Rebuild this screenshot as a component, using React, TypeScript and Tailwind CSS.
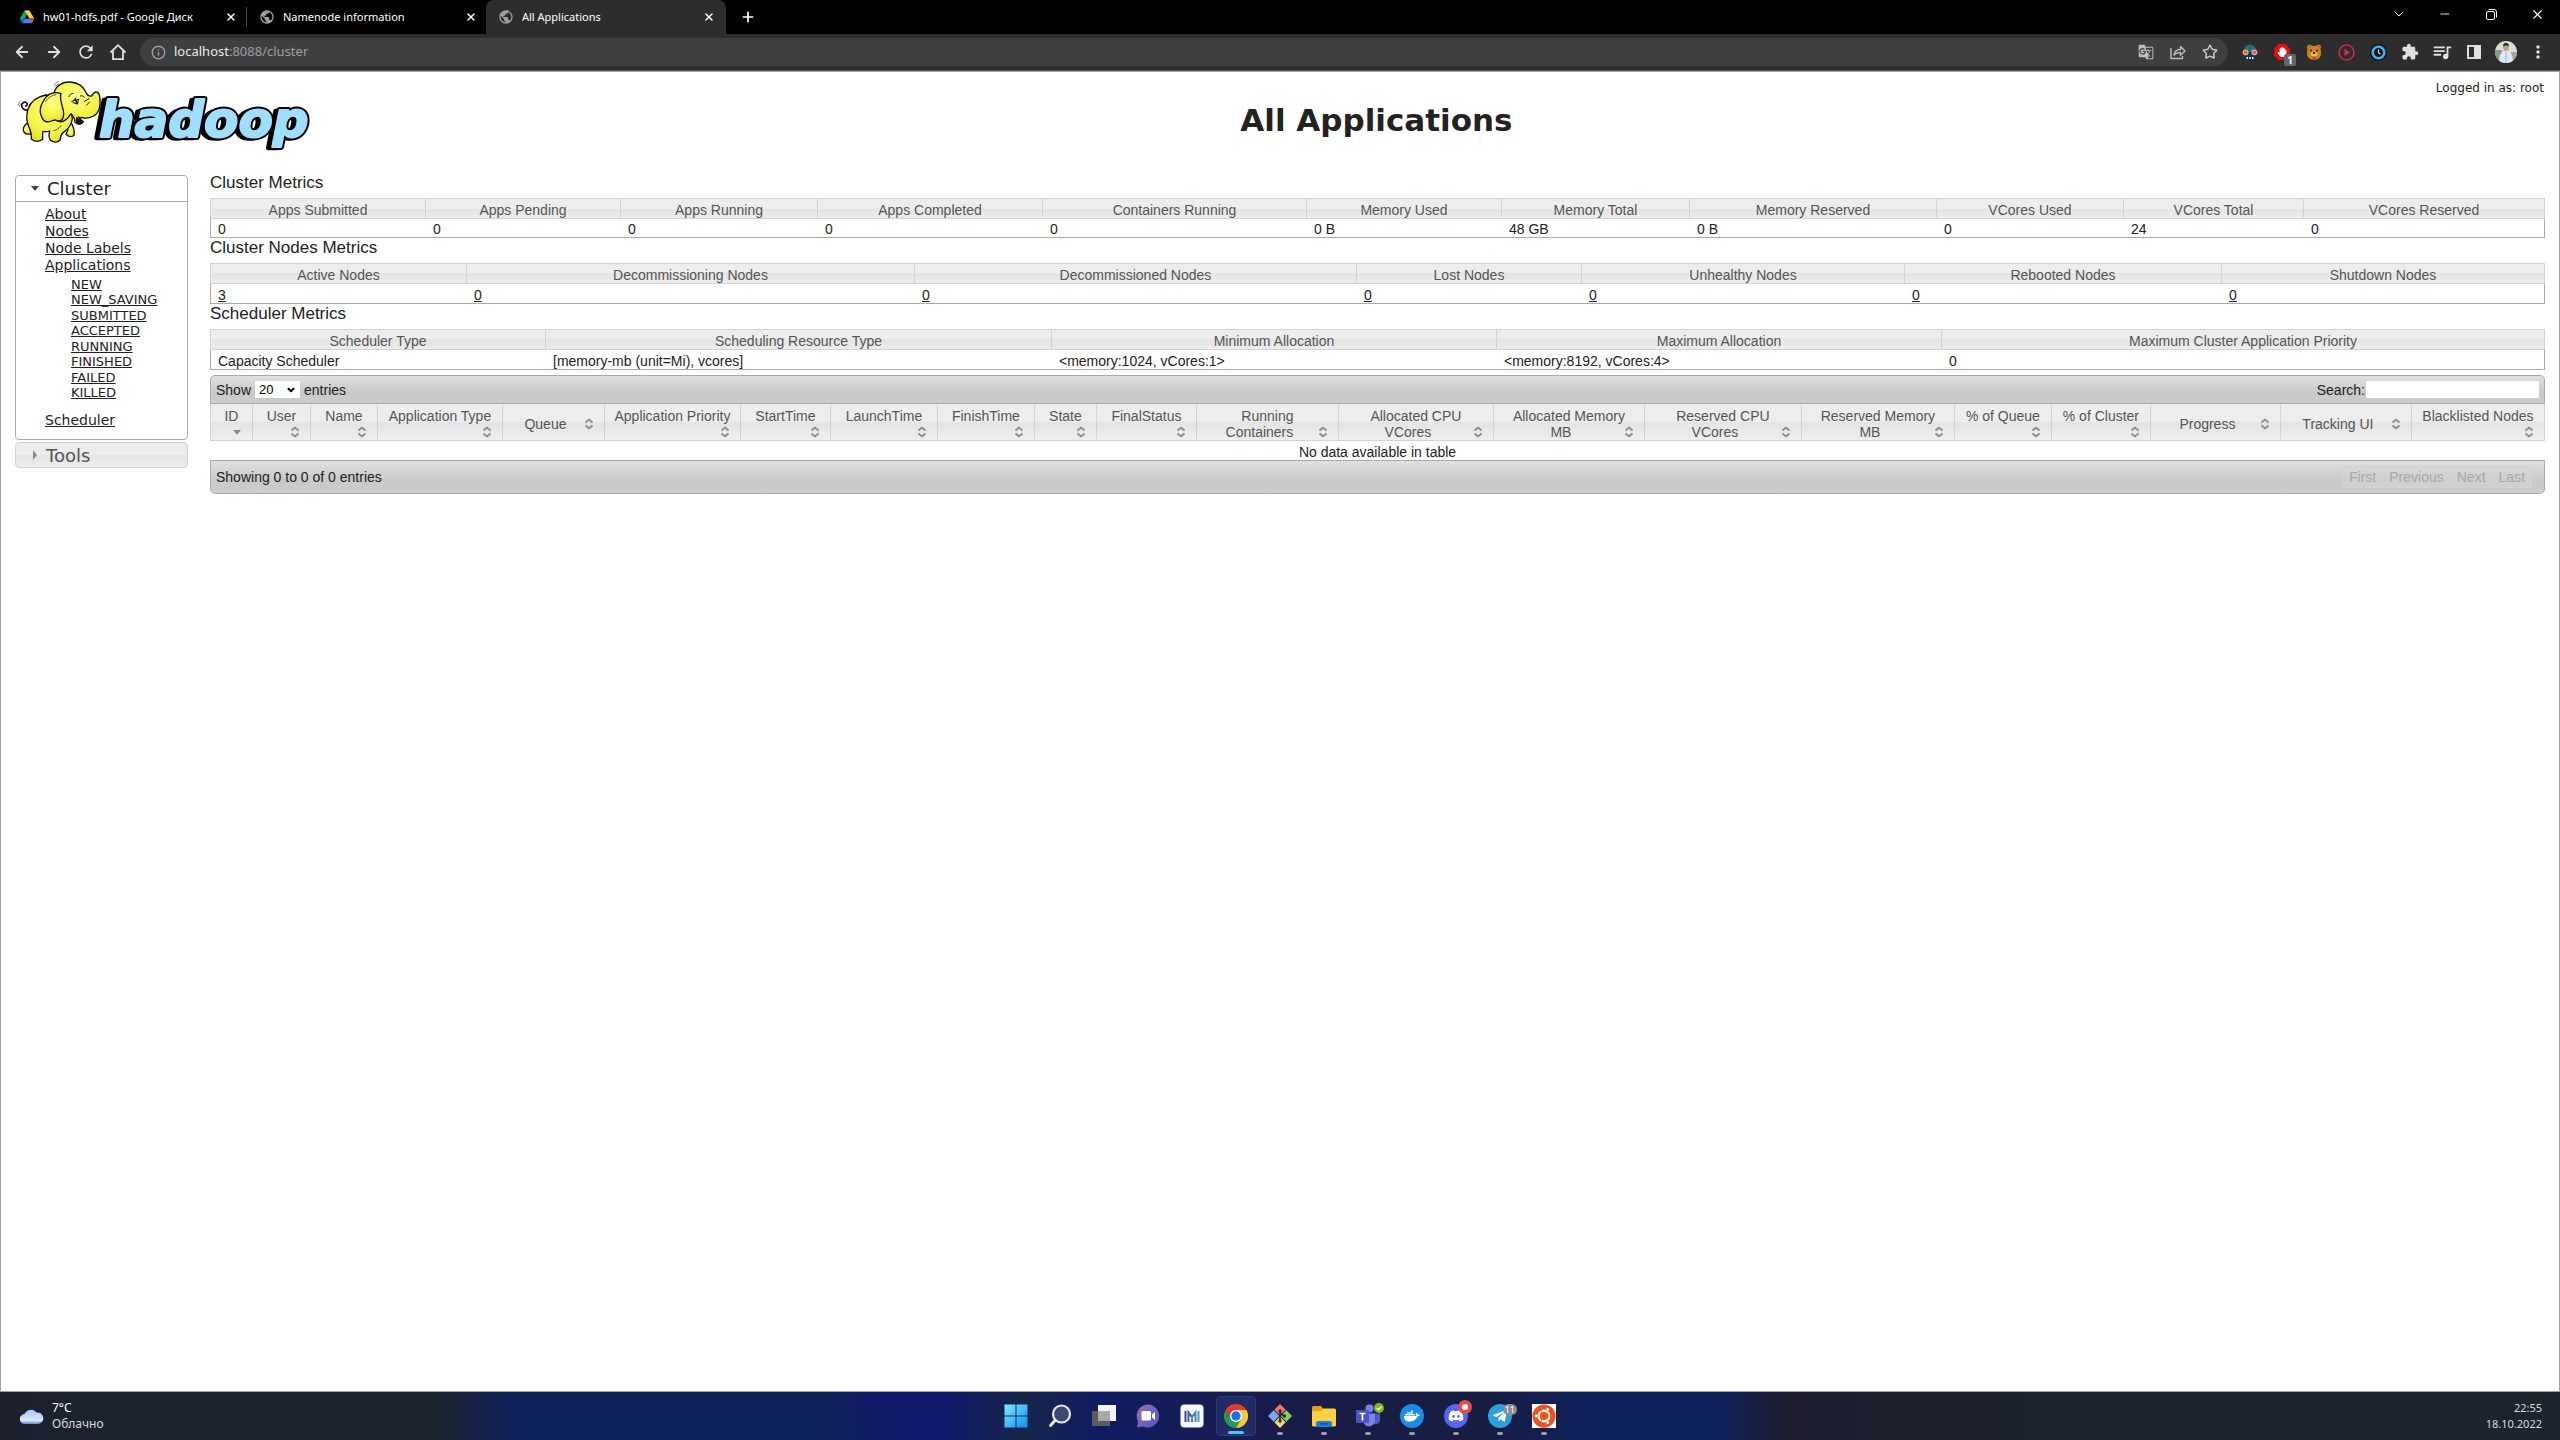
import type { ReactNode } from 'react';
import { ArrowLeft, ArrowRight, ChevronDown, Info, Minus, Plus, Star, X } from 'lucide-react';
import { FaDocker, FaDiscord, FaUbuntu, FaTelegramPlane, FaHandPaper } from 'react-icons/fa';
import { MdExtension, MdGTranslate, MdRefresh, MdQueueMusic, MdPublic } from 'react-icons/md';

/* ---------- Browser chrome ---------- */

function DriveIcon() {
  return (
    <svg className="size-4" viewBox="0 0 16 16" aria-hidden="true">
      <path d="M5.6 1.5h4.8L8 5.6 3.3 13.8 .8 9.6z" fill="#11a75c" />
      <path d="M5.6 1.5h4.8l4.8 8.1h-4.8z" fill="#ffcf48" />
      <path d="M3.3 14.2 5.7 9.8h9.5l-2.5 4.4z" fill="#3e82f1" />
      <path d="M.8 9.8h4.9l-2.4 4.4z" fill="#1f5fd0" />
      <path d="M10.3 9.8h4.9l-2.5 4.4z" fill="#e94335" />
    </svg>
  );
}

function Tab({ icon, title, active }: { icon: ReactNode; title: string; active?: boolean }) {
  return (
    <div
      className={
        active
          ? 'flex h-full w-[240px] items-center rounded-t-lg bg-[#2d2d2d] pr-[9px] pl-3 text-white'
          : 'flex h-full w-[239px] items-center pr-[7px] pl-3 text-white'
      }
    >
      <span className="flex size-4 shrink-0 items-center justify-center text-[#9aa0a6]">{icon}</span>
      <span className="ml-2 flex-1 truncate">{title}</span>
      <button type="button" aria-label={'Close ' + title} className="flex size-4 items-center justify-center">
        <X className="size-3" strokeWidth={3} />
      </button>
    </div>
  );
}

function BarButton({ label, children }: { label: string; children: ReactNode }) {
  return (
    <button type="button" aria-label={label} className="relative flex h-8 w-8 items-center justify-center text-[#e0e0e0]">
      {children}
    </button>
  );
}

function WindowButton({ label, children }: { label: string; children: ReactNode }) {
  return (
    <button type="button" aria-label={label} className="flex h-7 w-[46px] items-center justify-center text-white">
      {children}
    </button>
  );
}

function MaskIcon() {
  return (
    <svg className="size-4" viewBox="0 0 16 16" aria-hidden="true">
      <path d="M2 6.500a6 6 0 0 1 12 0V8H2z" fill="#2a6a7c" />
      <path d="M2.500 9h11v6h-11z" fill="#123a4a" />
      <circle cx="3.600" cy="8.300" r="2.900" fill="#e9c4b4" />
      <circle cx="12.400" cy="8.300" r="2.900" fill="#e9c4b4" />
      <circle cx="3.600" cy="8.300" r="2" fill="#f0603a" />
      <circle cx="12.400" cy="8.300" r="2" fill="#f0603a" />
      <path d="M4.500 13h1.500v2H4.500zM7.300 13h1.500v2H7.300zM10 13h1.500v2H10z" fill="#e8eef0" />
    </svg>
  );
}

function BlockerIcon() {
  return (
    <>
      <svg className="size-4" viewBox="0 0 16 16" aria-hidden="true">
        <path d="M4.700 0h6.600L16 4.700v6.600L11.300 16H4.700L0 11.300V4.700z" fill="#e01010" />
      </svg>
      <FaHandPaper className="absolute size-[10px] text-white" />
      <span className="absolute top-[18px] left-[18px] flex h-3 w-3 items-center justify-center rounded-xs bg-[#62666a] text-[10px] font-bold text-white">
        1
      </span>
    </>
  );
}

function BearIcon() {
  return (
    <svg className="size-4" viewBox="0 0 16 16" aria-hidden="true">
      <circle cx="3.500" cy="3" r="2.600" fill="#b8741e" />
      <circle cx="12.500" cy="3" r="2.600" fill="#b8741e" />
      <rect x="1" y="1.800" width="14" height="14" rx="6" fill="#c98327" />
      <circle cx="5" cy="6.500" r="1" fill="#2c1a08" />
      <circle cx="11" cy="6.500" r="1" fill="#2c1a08" />
      <ellipse cx="8" cy="10" rx="3.200" ry="2.600" fill="#f2c230" />
      <ellipse cx="8" cy="9" rx="1.500" ry="1" fill="#2c1a08" />
      <path d="M6.500 12.500h3V15h-3z" fill="#e2352c" />
    </svg>
  );
}

function PlayIcon() {
  return (
    <svg className="size-[17px]" viewBox="0 0 17 17" aria-hidden="true">
      <circle cx="8.500" cy="8.500" r="7.500" fill="none" stroke="#cf2650" strokeWidth="1.600" />
      <path d="M6.500 5l5.500 3.500L6.500 12z" fill="#e22858" />
    </svg>
  );
}

function ClockIcon() {
  return (
    <svg className="size-[17px]" viewBox="0 0 17 17" aria-hidden="true">
      <circle cx="8.500" cy="8.500" r="8.500" fill="#10141a" />
      <circle cx="8.500" cy="8.500" r="5.800" fill="none" stroke="#3fb3f0" strokeWidth="2.600" />
      <path d="M8.500 5.500v3.300l2 1.500" fill="none" stroke="#ddd" strokeWidth="1.200" />
    </svg>
  );
}

function Avatar() {
  return (
    <svg className="size-[22px]" viewBox="0 0 22 22" aria-hidden="true">
      <clipPath id="avatar-clip">
        <circle cx="11" cy="11" r="11" />
      </clipPath>
      <g clipPath="url(#avatar-clip)">
        <rect width="22" height="22" fill="#d9dedb" />
        <rect y="9" width="7" height="13" fill="#8c9a86" />
        <rect x="16" y="11" width="6" height="11" fill="#a8a698" />
        <path d="M4 22c0-8 2-12 7-12s7 4 7 12z" fill="#dfe6f5" />
        <path d="M11 11v11" stroke="#a9b6d6" strokeWidth="1" />
        <ellipse cx="11" cy="6.500" rx="2.800" ry="3.500" fill="#c79a84" />
        <path d="M8 5.500c0-5 6-5 6 0-1.500-1.500-4.500-1.500-6 0z" fill="#2f2622" />
      </g>
    </svg>
  );
}

function BrowserChrome() {
  return (
    <div className="font-['Noto_Sans','Open_Sans',sans-serif]">
      <div className="flex h-[34px] items-center justify-between bg-black text-[11px]">
        <div className="flex h-full items-center pl-[7px]">
          <Tab icon={<DriveIcon />} title="hw01-hdfs.pdf - Google Диск" />
          <span className="h-5 w-px bg-[#4a4c50]" />
          <Tab icon={<MdPublic className="size-4" />} title="Namenode information" />
          <Tab icon={<MdPublic className="size-4" />} title="All Applications" active />
          <button type="button" aria-label="New tab" className="ml-[14px] flex size-4 items-center justify-center text-white">
            <Plus className="size-4" strokeWidth={2.5} />
          </button>
        </div>
        <div className="flex h-full items-start">
          <WindowButton label="Search tabs">
            <ChevronDown className="size-4" strokeWidth={1.5} />
          </WindowButton>
          <WindowButton label="Minimize">
            <Minus className="size-[14px]" strokeWidth={1.5} />
          </WindowButton>
          <WindowButton label="Restore">
            <svg className="size-[11px]" viewBox="0 0 11 11" fill="none" stroke="currentColor" aria-hidden="true">
              <rect x=".5" y="2.500" width="8" height="8" rx="1.500" />
              <path d="M2.500.5h5.500a2.500 2.500 0 0 1 2.500 2.500v5.500" />
            </svg>
          </WindowButton>
          <WindowButton label="Close">
            <X className="size-[15px]" strokeWidth={1.8} />
          </WindowButton>
        </div>
      </div>

      <div className="flex h-[37px] items-center border-b border-[#5a5a5a] bg-[#2d2d2d] pr-[6px] pl-[6px]">
        <BarButton label="Back">
          <ArrowLeft className="size-[18px]" strokeWidth={2.4} />
        </BarButton>
        <BarButton label="Forward">
          <ArrowRight className="size-[18px]" strokeWidth={2.4} />
        </BarButton>
        <BarButton label="Reload">
          <MdRefresh className="size-5" />
        </BarButton>
        <BarButton label="Home">
          <svg className="size-[18px]" viewBox="0 0 18 18" fill="none" stroke="currentColor" strokeWidth="1.800" aria-hidden="true">
            <path d="M1.500 9.500 9 2.200l7.500 7.300M4 8v8.200h10V8" />
          </svg>
        </BarButton>
        <div className="ml-[6px] flex h-7 flex-1 items-center rounded-full bg-[#3f3f3f] pr-[2px] pl-[11px]">
          <Info className="size-[15px] text-[#9aa0a6]" strokeWidth={2.2} />
          <div className="ml-2 flex-1 text-[13px] text-[#9aa0a6]">
            <span className="text-[#e8eaed]">localhost</span>:8088/cluster
          </div>
          <BarButton label="Translate this page">
            <MdGTranslate className="size-4 text-[#bdbdbd]" />
          </BarButton>
          <BarButton label="Share this page">
            <svg className="size-4" viewBox="0 0 16 16" fill="none" stroke="#bdbdbd" strokeWidth="1.400" strokeLinejoin="round" aria-hidden="true">
              <path d="M1 4v10.500h11.500V12" />
              <path d="M4 11c.5-4 3-5.500 6.500-5.500V2.500L15 7l-4.500 4.300V8.500C8 8.500 6 9 4 11z" />
            </svg>
          </BarButton>
          <BarButton label="Bookmark this tab">
            <Star className="size-4 text-[#c8c8c8]" strokeWidth={2.2} />
          </BarButton>
        </div>
        <div className="ml-[6px] flex items-center">
          <BarButton label="Incognito extension">
            <MaskIcon />
          </BarButton>
          <BarButton label="Ad blocker">
            <BlockerIcon />
          </BarButton>
          <BarButton label="Bear extension">
            <BearIcon />
          </BarButton>
          <BarButton label="Player extension">
            <PlayIcon />
          </BarButton>
          <BarButton label="Clock extension">
            <ClockIcon />
          </BarButton>
          <BarButton label="Extensions">
            <MdExtension className="size-[18px]" />
          </BarButton>
          <BarButton label="Media controls">
            <MdQueueMusic className="size-[22px]" />
          </BarButton>
          <BarButton label="Side panel">
            <svg className="size-[14px]" viewBox="0 0 14 14" aria-hidden="true">
              <path d="M0 0h14v14H0zM2 2v10h5V2z" fill="#e0e0e0" fillRule="evenodd" />
            </svg>
          </BarButton>
          <BarButton label="Profile">
            <Avatar />
          </BarButton>
          <BarButton label="Menu">
            <svg className="h-[14px] w-1" viewBox="0 0 4 14" fill="#e0e0e0" aria-hidden="true">
              <circle cx="2" cy="2" r="1.700" />
              <circle cx="2" cy="7" r="1.700" />
              <circle cx="2" cy="12" r="1.700" />
            </svg>
          </BarButton>
        </div>
      </div>
    </div>
  );
}

/* ---------- Hadoop page ---------- */

function HadoopLogo() {
  return (
    <svg className="h-[72px] w-[300px] shrink-0" viewBox="50 28 900 216" role="img" aria-label="hadoop">
      <defs>
        <radialGradient id="hide" cx=".5" cy=".35" r=".75">
          <stop offset="0" stopColor="#ffff8c" />
          <stop offset=".6" stopColor="#f5f345" />
          <stop offset="1" stopColor="#d9d62a" />
        </radialGradient>
      </defs>
      <g className="font-['DejaVu_Sans'] text-[150px] font-bold italic" strokeLinejoin="round">
        <text x="284" y="202" fill="#000" stroke="#000" strokeWidth="14">hadoop</text>
        <text x="296" y="200" fill="#000" stroke="#000" strokeWidth="18">hadoop</text>
        <text x="296" y="200" fill="#a0deff" stroke="#a0deff" strokeWidth="6">hadoop</text>
      </g>
      <g stroke="#111" strokeWidth="4" strokeLinejoin="round" strokeLinecap="round">
        <path d="M84 118c-10 2-19-4-20-12-1-9 8-14 14-10 5 4 2 9-2 10" fill="none" strokeWidth="5" />
        <path d="M80 158c-8 6-12 14-11 22 3 8 10 12 22 10l10-18z" fill="url(#hide)" />
        <path d="M200 165c4 8 2 18-3 26 8 8 18 9 24 3 2-12-3-30-11-42z" fill="url(#hide)" />
        <path d="M136 73c-28 6-46 22-53 42-6 20-5 36 2 52 6 14 9 26 8 38 8 9 25 9 34 1 0-8-1-14 1-24 6 2 12 2 20-1-3 12-3 20 2 27 9 8 24 9 30-1 0-10 3-18 12-24 14-10 22-24 24-38l-10-70z" fill="url(#hide)" />
        <path d="M162 64c6-20 26-31 48-30 22 2 38 12 45 28 5 10 12 16 19 14 4-6 8-13 13-12 7 0 10 6 11 14 4 28 0 48-18 58-12 6-26 8-36 4-2 2-6 2-10-1 4 6 12 10 14 14-4 10-16 10-24 2 0-10-4-18-12-26-10 16-22 26-34 24-26-2-36-50-16-89z" fill="url(#hide)" />
        <path d="M180 68c-22-6-40 4-50 22-10 16-14 30-8 44 4 12 12 20 20 20 8 0 16-6 24-6 6 4 14 4 20-2 6-10 4-26 0-38-4-14-8-28-4-40z" fill="url(#hide)" />
        <path d="M229 141c4 6 12 10 20 12-4 6-14 8-20 2z" fill="#111" />
        <path d="M206 78c2-6 6-10 12-10M240 76c6-2 8 0 12 4M252 92l14-8M258 104l10-10M214 92l22-6M218 96l14 4 2-14M220 88l8-8" fill="none" strokeWidth="3" />
        <path d="M226 88l4 10" strokeWidth="6" />
        <path d="M136 92c8-12 18-18 30-20M90 178l2 10M160 180c8-2 16-6 22-14" fill="none" strokeWidth="2" />
      </g>
      <g stroke="#888" strokeWidth="3" fill="none" strokeLinecap="round">
        <path d="M162 44c2-6 6-9 12-11M166 48c2-4 4-6 8-8M54 104c0-5 2-9 6-12M58 108c0-4 1-7 4-10" />
      </g>
    </svg>
  );
}

const appStates = ['NEW', 'NEW_SAVING', 'SUBMITTED', 'ACCEPTED', 'RUNNING', 'FINISHED', 'FAILED', 'KILLED'];

function Sidebar() {
  return (
    <nav className="mt-[2px] ml-[14px] w-[173px] shrink-0 font-['DejaVu_Sans',Verdana,sans-serif] text-[#222]">
      <section className="rounded-[4px] border border-[#aaa] bg-white">
        <h3>
          <button type="button" className="flex h-[25px] w-full items-center pl-[15px] text-[18px] leading-6">
            <span className="mr-2 border-x-[4px] border-t-[5px] border-x-transparent border-t-[#454545]" />
            Cluster
          </button>
        </h3>
        <div className="h-[238px] border-t border-[#aaa] pt-1 pl-[29px] text-sm leading-[17px]">
          <ul>
            {['About', 'Nodes', 'Node Labels', 'Applications'].map((t) => (
              <li key={t}>
                <a href={'#' + t} className="underline">{t}</a>
              </li>
            ))}
          </ul>
          <ul className="mt-[3px] flex h-[123px] flex-col justify-between pl-[26px] text-[13px] leading-[15px]">
            {appStates.map((t) => (
              <li key={t}>
                <a href={'#' + t} className="underline">{t}</a>
              </li>
            ))}
          </ul>
          <a href="#scheduler" className="mt-3 inline-block underline">Scheduler</a>
        </div>
      </section>
      <h3 className="mt-[2px]">
        <button
          type="button"
          className="flex h-[26px] w-full items-center rounded-[4px] border border-[#d3d3d3] bg-[linear-gradient(#ededed_50%,#e4e4e4_50%,#eeeeee)] pl-[17px] text-[18px] text-[#555]"
        >
          <span className="mr-[9px] border-y-[5px] border-l-[4px] border-y-transparent border-l-[#888]" />
          Tools
        </button>
      </h3>
    </nav>
  );
}

type Column = { label: string; width: number; value: string };

function Columns({ widths }: { widths: number[] }) {
  const total = widths.reduce((a, b) => a + b, 0);
  return (
    <colgroup>
      {widths.map((w, i) => (
        <col key={i} style={{ width: `${(w / total) * 100}%` }} />
      ))}
    </colgroup>
  );
}

function Metrics({ title, columns, links, compact }: { title: string; columns: Column[]; links?: boolean; compact?: boolean }) {
  return (
    <section>
      <h3 className="h-[25px] text-[17px] leading-5">{title}</h3>
      <table className="w-full table-fixed border-separate border-spacing-0 text-sm" aria-label={title}>
        <Columns widths={columns.map((c) => c.width)} />
        <thead>
          <tr>
            {columns.map((c) => (
              <th
                key={c.label}
                className="h-[21px] border-y border-r border-[#d3d3d3] bg-[linear-gradient(#ededed_50%,#e4e4e4_50%,#ededed)] pt-1 text-center leading-[15px] font-normal text-[#555] first:border-l"
              >
                {c.label}
              </th>
            ))}
          </tr>
        </thead>
        <tbody className={compact ? 'leading-[15px]' : 'leading-4'}>
          <tr>
            {columns.map((c) => (
              <td key={c.label} className="border-b border-[#aaa] pt-[3px] pl-[7px] first:border-l last:border-r">
                {links ? <a href="#nodes" className="underline">{c.value}</a> : c.value}
              </td>
            ))}
          </tr>
        </tbody>
      </table>
    </section>
  );
}

const clusterMetrics: Column[] = [
  { label: 'Apps Submitted', width: 216, value: '0' },
  { label: 'Apps Pending', width: 195, value: '0' },
  { label: 'Apps Running', width: 197, value: '0' },
  { label: 'Apps Completed', width: 225, value: '0' },
  { label: 'Containers Running', width: 264, value: '0' },
  { label: 'Memory Used', width: 195, value: '0 B' },
  { label: 'Memory Total', width: 188, value: '48 GB' },
  { label: 'Memory Reserved', width: 247, value: '0 B' },
  { label: 'VCores Used', width: 187, value: '0' },
  { label: 'VCores Total', width: 180, value: '24' },
  { label: 'VCores Reserved', width: 241, value: '0' },
];

const nodeMetrics: Column[] = [
  { label: 'Active Nodes', width: 257, value: '3' },
  { label: 'Decommissioning Nodes', width: 448, value: '0' },
  { label: 'Decommissioned Nodes', width: 442, value: '0' },
  { label: 'Lost Nodes', width: 225, value: '0' },
  { label: 'Unhealthy Nodes', width: 323, value: '0' },
  { label: 'Rebooted Nodes', width: 317, value: '0' },
  { label: 'Shutdown Nodes', width: 323, value: '0' },
];

const schedulerMetrics: Column[] = [
  { label: 'Scheduler Type', width: 336, value: 'Capacity Scheduler' },
  { label: 'Scheduling Resource Type', width: 506, value: '[memory-mb (unit=Mi), vcores]' },
  { label: 'Minimum Allocation', width: 445, value: '<memory:1024, vCores:1>' },
  { label: 'Maximum Allocation', width: 445, value: '<memory:8192, vCores:4>' },
  { label: 'Maximum Cluster Application Priority', width: 603, value: '0' },
];

/* Heading lines; the sort arrow shares the last one. */
const appColumns: { lines: string[]; width: number }[] = [
  { lines: ['ID', ''], width: 43 },
  { lines: ['User', ''], width: 58 },
  { lines: ['Name', ''], width: 67 },
  { lines: ['Application Type', ''], width: 125 },
  { lines: ['Queue'], width: 102 },
  { lines: ['Application Priority', ''], width: 136 },
  { lines: ['StartTime', ''], width: 90 },
  { lines: ['LaunchTime', ''], width: 107 },
  { lines: ['FinishTime', ''], width: 97 },
  { lines: ['State', ''], width: 62 },
  { lines: ['FinalStatus', ''], width: 100 },
  { lines: ['Running', 'Containers'], width: 142 },
  { lines: ['Allocated CPU', 'VCores'], width: 155 },
  { lines: ['Allocated Memory', 'MB'], width: 151 },
  { lines: ['Reserved CPU', 'VCores'], width: 157 },
  { lines: ['Reserved Memory', 'MB'], width: 153 },
  { lines: ['% of Queue', ''], width: 97 },
  { lines: ['% of Cluster', ''], width: 99 },
  { lines: ['Progress'], width: 130 },
  { lines: ['Tracking UI'], width: 131 },
  { lines: ['Blacklisted Nodes', ''], width: 133 },
];

function SortIcon({ sorted }: { sorted: boolean }) {
  return (
    <svg className="size-4 shrink-0" viewBox="0 0 16 16" aria-hidden="true">
      {sorted ? (
        <path d="M4 6h8l-4 4.500z" fill="#888" />
      ) : (
        <path d="M4.500 6.500 8 3.500 11.500 6.500M4.500 9.500 8 12.500l3.500-3" fill="none" stroke="#888" strokeWidth="1.700" />
      )}
    </svg>
  );
}

function ApplicationsTable() {
  return (
    <div className="mt-[5px] text-sm">
      <div className="flex h-[29px] items-center justify-between rounded-t-[5px] border border-[#aaa] bg-[linear-gradient(#e0e0e0,#c9c9c9_60%,#cccccc)] pr-[5px] pl-[5px]">
        <label className="flex items-center gap-1">
          Show
          <span className="relative flex items-center">
            <select
              defaultValue="20"
              className="h-[17px] w-[45px] appearance-none bg-white pl-1 text-[13px] leading-[17px] text-black"
            >
              <option>20</option>
              <option>40</option>
              <option>60</option>
            </select>
            <ChevronDown className="pointer-events-none absolute right-1 size-[10px] text-black" strokeWidth={5} />
          </span>
          entries
        </label>
        <label className="flex items-center gap-px">
          Search:
          <input type="text" className="h-[17px] w-[173px] bg-white px-1 text-[13px] outline-none" />
        </label>
      </div>
      <table className="w-full table-fixed border-separate border-spacing-0" aria-label="Applications">
        <Columns widths={appColumns.map((c) => c.width)} />
        <thead>
          <tr>
            {appColumns.map((c) => (
              <th
                key={c.lines[0]}
                className="h-9 border-r border-b border-[#d3d3d3] bg-[linear-gradient(#ededed_50%,#e4e4e4_50%,#eeeeee)] pt-1 leading-[15px] font-normal whitespace-nowrap text-[#555] first:border-l"
              >
                {c.lines.length > 1 && <span className="flex h-4 items-center justify-center">{c.lines[0]}</span>}
                <span className="flex h-4 items-center pr-[7px]">
                  <span className="flex-1 pl-[7px] text-center">{c.lines[c.lines.length - 1]}</span>
                  <SortIcon sorted={c.lines[0] === 'ID'} />
                </span>
              </th>
            ))}
          </tr>
        </thead>
        <tbody>
          <tr>
            <td colSpan={21} className="h-[19px] pt-[2px] text-center leading-4">
              No data available in table
            </td>
          </tr>
        </tbody>
      </table>
      <div className="flex h-[34px] items-center justify-between rounded-b-[5px] border border-[#aaa] bg-[linear-gradient(#e0e0e0,#c9c9c9_60%,#cccccc)] pr-3 pl-[5px]">
        <span>Showing 0 to 0 of 0 entries</span>
        <div className="flex text-[#a9a9a9]">
          {['First', 'Previous', 'Next', 'Last'].map((t) => (
            <button
              key={t}
              type="button"
              disabled
              className="h-[22px] border-y border-r border-[#d2d2d2] bg-[#d5d5d5]/50 px-[6px] leading-5 first:border-l"
            >
              {t}
            </button>
          ))}
        </div>
      </div>
    </div>
  );
}

function HadoopPage() {
  return (
    <main className="flex-1 border border-[#a0a0a0] bg-white font-['Liberation_Sans',Arial,sans-serif] text-[#222]">
      <header className="flex h-[101px] items-start pt-2 pr-[15px] pl-4 font-['DejaVu_Sans',Verdana,sans-serif]">
        <HadoopLogo />
        <h1 className="mt-5 flex-1 text-center text-[31px] leading-10 font-bold">All Applications</h1>
        <div className="text-xs leading-4">Logged in as: root</div>
      </header>
      <div className="flex items-start pr-[14px]">
        <Sidebar />
        <div className="ml-[22px] min-w-0 flex-1">
          <Metrics title="Cluster Metrics" columns={clusterMetrics} compact />
          <Metrics title="Cluster Nodes Metrics" columns={nodeMetrics} links />
          <Metrics title="Scheduler Metrics" columns={schedulerMetrics} />
          <ApplicationsTable />
        </div>
      </div>
    </main>
  );
}

/* ---------- Taskbar ---------- */

function WindowsIcon() {
  return (
    <svg className="size-6" viewBox="0 0 24 24" aria-hidden="true">
      <linearGradient id="win" x1="0" y1="0" x2="1" y2="1">
        <stop offset="0" stopColor="#7cecff" />
        <stop offset="1" stopColor="#0d8ff5" />
      </linearGradient>
      <path d="M.5.5h11v11H.5zM12.500.5h11v11h-11zM.5 12.500h11v11H.5zM12.500 12.500h11v11h-11z" fill="url(#win)" />
    </svg>
  );
}

function SearchIcon() {
  return (
    <svg className="size-6" viewBox="0 0 24 24" fill="#3a4a70" stroke="#e8e8ea" aria-hidden="true">
      <circle cx="13.500" cy="10" r="8.500" strokeWidth="2.200" />
      <path d="M7 16.500 2.500 21.500" strokeWidth="3" strokeLinecap="round" />
    </svg>
  );
}

function TaskViewIcon() {
  return (
    <svg className="size-6" viewBox="0 0 24 24" aria-hidden="true">
      <rect x="6" y="1" width="18" height="16" fill="#f4f4f4" />
      <rect x="0" y="7" width="18" height="15" fill="#5c5c5e" />
      <rect x="6" y="7" width="12" height="10" fill="#a9a9ab" />
    </svg>
  );
}

function ChatIcon() {
  return (
    <svg className="size-6" viewBox="0 0 24 24" aria-hidden="true">
      <linearGradient id="chat" x1="0" y1="0" x2="1" y2="1">
        <stop offset="0" stopColor="#9a6fa8" />
        <stop offset="1" stopColor="#4f57c8" />
      </linearGradient>
      <path d="M12 .5A11.500 11.500 0 1 1 7 22.500L1 23.500l1-6A11.500 11.500 0 0 1 12 .5z" fill="url(#chat)" />
      <rect x="5.500" y="7" width="9.500" height="9.500" rx="1.500" fill="#fff" />
      <path d="M16 10.500 19 8v8l-3-2.500z" fill="#fff" />
    </svg>
  );
}

function MIcon() {
  return (
    <svg className="size-6" viewBox="0 0 24 24" aria-hidden="true">
      <linearGradient id="mark" gradientUnits="userSpaceOnUse" x1="4" y1="0" x2="20" y2="0">
        <stop offset="0" stopColor="#34408c" />
        <stop offset="1" stopColor="#5aa0c0" />
      </linearGradient>
      <rect x=".5" y=".5" width="23" height="23" rx="4" fill="#f7f8fc" />
      <path d="M5.500 18V7M8.500 18V8.500L12 13l3.500-4.500V18M18.500 18V7M12 14.500V18" fill="none" stroke="url(#mark)" strokeWidth="2" />
    </svg>
  );
}

function ChromeIcon() {
  return (
    <svg className="size-6" viewBox="0 0 24 24" aria-hidden="true">
      <path d="M12 12l5.200 3L12 24A12 12 0 0 1 1.600 6l5.200 9z" fill="#229a50" />
      <path d="M12 6h10.400A12 12 0 0 1 12 24l5.200-9z" fill="#fcc934" />
      <path d="M1.600 6A12 12 0 0 1 22.400 6H12L6.800 15z" fill="#e33b2e" />
      <circle cx="12" cy="12" r="6" fill="#fff" />
      <circle cx="12" cy="12" r="4.700" fill="#1a73e8" />
    </svg>
  );
}

function GitIcon() {
  return (
    <svg className="size-6" viewBox="0 0 24 24" aria-hidden="true">
      <g transform="rotate(45 12 12)">
        <rect x="3.500" y="3.500" width="8" height="8" fill="#f07474" />
        <rect x="12.500" y="3.500" width="8" height="8" fill="#8ccf5a" />
        <rect x="3.500" y="12.500" width="8" height="8" fill="#7aa8f4" />
        <rect x="12.500" y="12.500" width="8" height="8" fill="#f6d866" />
      </g>
      <path d="M12 6v12M12 9l4.500 3.500" stroke="#2b2b2b" strokeWidth="1.600" />
      <circle cx="12" cy="7" r="1.700" fill="#2b2b2b" />
      <circle cx="12" cy="17" r="1.700" fill="#2b2b2b" />
      <circle cx="16.500" cy="12" r="1.700" fill="#2b2b2b" />
    </svg>
  );
}

function FolderIcon() {
  return (
    <svg className="size-6" viewBox="0 0 24 24" aria-hidden="true">
      <path d="M0 3.500A1.500 1.500 0 0 1 1.500 2H9l2 3v4H0z" fill="#e3a210" />
      <path d="M0 7h9l2-2.500h11.500A1.500 1.500 0 0 1 24 6v15a1.500 1.500 0 0 1-1.500 1.500h-21A1.500 1.500 0 0 1 0 21z" fill="#fdcf42" />
      <path d="M4 23v-4a2 2 0 0 1 2-2h12a2 2 0 0 1 2 2v4z" fill="#1583d8" />
      <path d="M8 19.800h8" stroke="#0b4f94" strokeWidth="1.400" />
    </svg>
  );
}

function TeamsIcon() {
  return (
    <>
      <svg className="size-6" viewBox="0 0 24 24" aria-hidden="true">
        <circle cx="13.500" cy="4.500" r="4" fill="#7b83eb" />
        <path d="M16 9.500h8v7a4.500 4.500 0 0 1-8 2z" fill="#5059c9" />
        <path d="M8 9.500h11V16a6 6 0 0 1-11 3.500z" fill="#7b83eb" />
        <rect x="0" y="6" width="13" height="13" rx="1" fill="#4b53bc" />
        <path d="M3.500 9.500h6M6.500 9.500v7" stroke="#fff" strokeWidth="1.700" />
      </svg>
      <svg className="absolute top-[7px] right-[6px] size-[10px]" viewBox="0 0 11 11" aria-hidden="true">
        <circle cx="5.500" cy="5.500" r="5.500" fill="#7fba1a" />
        <path d="M3 5.500 5 7.500 8.300 3.800" fill="none" stroke="#fff" strokeWidth="1.400" />
      </svg>
    </>
  );
}

function DockerIcon() {
  return (
    <span className="flex size-6 items-center justify-center rounded-full bg-[#1c8ceb]">
      <FaDocker className="size-4 text-white" />
    </span>
  );
}

function DiscordIcon() {
  return (
    <>
      <span className="flex size-6 items-center justify-center rounded-full bg-[#5865f2]">
        <FaDiscord className="size-4 text-white" />
      </span>
      <span className="absolute top-1 right-[6px] flex size-[14px] items-center justify-center rounded-full bg-[#e8484c]">
        <span className="size-[6px] rounded-full bg-white" />
      </span>
    </>
  );
}

function TelegramIcon() {
  return (
    <>
      <span className="flex size-6 items-center justify-center rounded-full bg-[#2ba0da]">
        <FaTelegramPlane className="size-4 text-white" />
      </span>
      <span className="absolute top-2 right-[5px] rounded-full bg-[#8a8c90] px-[2px] text-[9px] leading-[11px] text-white">11</span>
    </>
  );
}

function UbuntuIcon() {
  return (
    <span className="flex size-6 items-center justify-center bg-[#e95420]">
      <FaUbuntu className="size-6 bg-white text-[#e95420]" />
    </span>
  );
}

const taskbarApps: { name: string; icon: ReactNode; state?: 'open' | 'active' }[] = [
  { name: 'Start', icon: <WindowsIcon /> },
  { name: 'Search', icon: <SearchIcon /> },
  { name: 'Task view', icon: <TaskViewIcon /> },
  { name: 'Chat', icon: <ChatIcon /> },
  { name: 'M', icon: <MIcon /> },
  { name: 'Google Chrome', icon: <ChromeIcon />, state: 'active' },
  { name: 'Git', icon: <GitIcon />, state: 'open' },
  { name: 'File Explorer', icon: <FolderIcon />, state: 'open' },
  { name: 'Teams', icon: <TeamsIcon />, state: 'open' },
  { name: 'Docker', icon: <DockerIcon />, state: 'open' },
  { name: 'Discord', icon: <DiscordIcon />, state: 'open' },
  { name: 'Telegram', icon: <TelegramIcon />, state: 'open' },
  { name: 'Ubuntu', icon: <UbuntuIcon />, state: 'open' },
];

function Taskbar() {
  return (
    <footer className="grid h-12 grid-cols-[1fr_auto_1fr] items-center bg-[linear-gradient(90deg,#1c212d_0%,#1b242f_17%,#10225a_20%,#10225a_32%,#12186a_35%,#12186a_37%,#16264a_40%,#101c62_43%,#181c4e_49%,#191d46_52%,#171d42_58%,#10225c_62%,#10225c_67%,#1c1c2c_70%,#1c212d_75%,#1c242e_100%)] font-['Noto_Sans','Open_Sans',sans-serif] text-[#d8dadd]">
      <button type="button" className="flex items-center gap-2 justify-self-start pl-5 text-left text-xs leading-4">
        <svg className="h-4 w-6" viewBox="0 0 24 16" aria-hidden="true">
          <linearGradient id="cloud" x1="0" y1="0" x2="0" y2="1">
            <stop offset="0" stopColor="#a9c6f8" />
            <stop offset=".75" stopColor="#dbe8fd" />
            <stop offset="1" stopColor="#5a86dc" />
          </linearGradient>
          <path d="M5 16a5 5 0 0 1-.5-10A7 7 0 0 1 16.500 4.500 5.800 5.800 0 0 1 18.500 16z" fill="url(#cloud)" />
        </svg>
        <span>
          <span className="block text-white">7°C</span>
          <span className="block">Облачно</span>
        </span>
      </button>
      <div className="flex">
        {taskbarApps.map((a) => (
          <button
            key={a.name}
            type="button"
            aria-label={a.name}
            className={
              a.state === 'active'
                ? 'relative mx-[2px] flex h-10 w-10 items-center justify-center rounded-[4px] border border-[#2d3a78] bg-[#212c66]'
                : 'relative flex h-10 w-11 items-center justify-center'
            }
          >
            {a.icon}
            {a.state === 'active' && <span className="absolute bottom-px h-[3px] w-4 rounded-full bg-[#4cc2ff]" />}
            {a.state === 'open' && <span className="absolute bottom-px h-[3px] w-[6px] rounded-full bg-[#9a9dab]" />}
          </button>
        ))}
      </div>
      <button type="button" className="justify-self-end pr-[18px] text-right text-[11px] leading-4">
        <span className="block">22:55</span>
        <span className="block">18.10.2022</span>
      </button>
    </footer>
  );
}

export default function App() {
  return (
    <div className="flex min-h-screen flex-col bg-white">
      <BrowserChrome />
      <HadoopPage />
      <Taskbar />
    </div>
  );
}
